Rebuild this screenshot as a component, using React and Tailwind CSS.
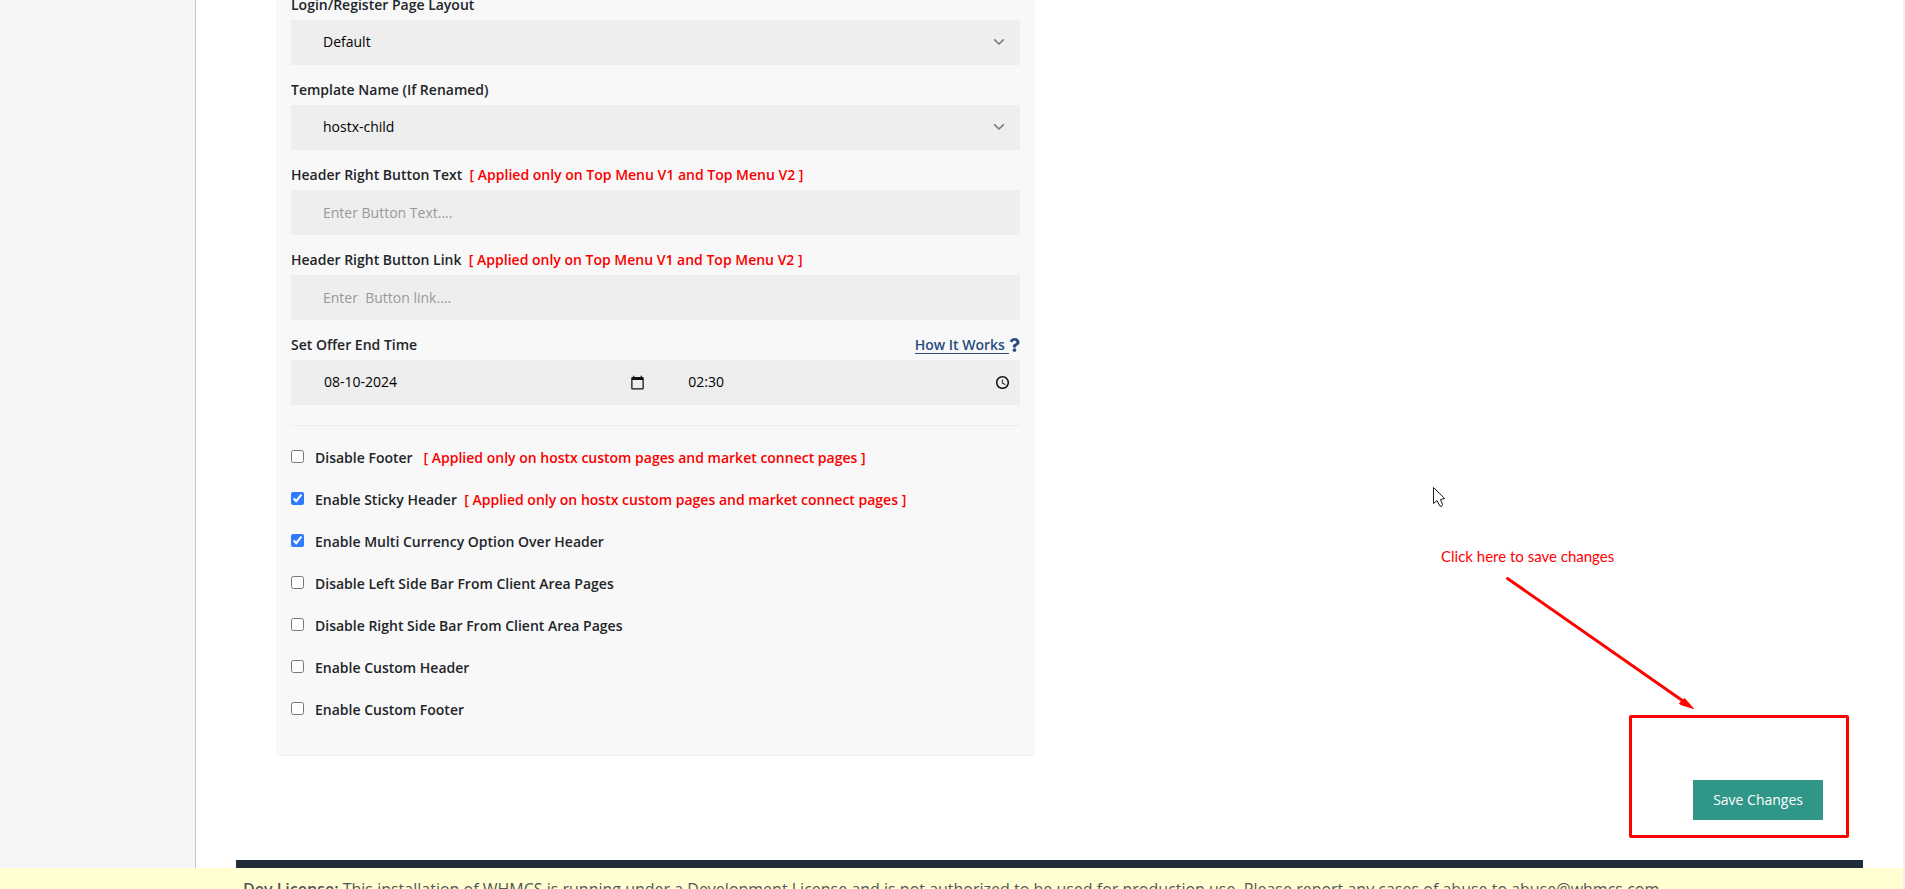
import { FaQuestion } from 'react-icons/fa';

const fieldClass =
  'block h-[45px] w-full appearance-none rounded-none border-0 bg-[#eeeeee] px-[32px] text-[14px] text-black outline-none placeholder:text-[#999999]';

function Note({ children }) {
  return <span className="whitespace-pre text-[#f80000]">{children}</span>;
}

function Label({ id, children }) {
  return (
    <label htmlFor={id} className="block whitespace-pre text-[14px] leading-[20px] font-semibold">
      {children}
    </label>
  );
}

function SelectField({ id, label, value }) {
  return (
    <div className="flex flex-col gap-[5px]">
      <Label id={id}>{label}</Label>
      <div className="relative">
        <select id={id} defaultValue={value} className={fieldClass + ' pb-[2px]'}>
          <option>{value}</option>
        </select>
        <svg viewBox="0 0 12 8" className="pointer-events-none absolute top-[18px] right-[15px] h-[8px] w-[12px]" fill="none" stroke="#777777" strokeWidth="1.5">
          <path d="M1.2 1.4 6 6 10.8 1.4" />
        </svg>
      </div>
    </div>
  );
}

function TextField({ id, label, note, placeholder }) {
  return (
    <div className="flex flex-col gap-[5px]">
      <Label id={id}>
        {label}
        <Note>{'  ' + note}</Note>
      </Label>
      <input id={id} type="text" placeholder={placeholder} className={fieldClass} />
    </div>
  );
}

function CalendarIcon() {
  return (
    <svg viewBox="0 0 24 24" className="h-[15px] w-[15px]" fill="#111111">
      <path d="M20 3h-1V1h-2v2H7V1H5v2H4c-1.100 0-2 .9-2 2v16c0 1.100.9 2 2 2h16c1.100 0 2-.9 2-2V5c0-1.100-.9-2-2-2zm0 18H4V8h16v13z" />
    </svg>
  );
}

function ClockIcon() {
  return (
    <svg viewBox="0 0 24 24" className="h-[15px] w-[15px]" fill="#111111">
      <path d="M12 1.500C6.200 1.500 1.500 6.200 1.500 12S6.200 22.500 12 22.500 22.500 17.800 22.500 12 17.800 1.500 12 1.500zm0 18.500c-4.400 0-8-3.600-8-8s3.600-8 8-8 8 3.600 8 8-3.600 8-8 8zm.5-13H11v6l5.250 3.150.75-1.230-4.500-2.670V7z" />
    </svg>
  );
}

function PickerField({ id, name, value, icon }) {
  return (
    <div className="relative flex-1">
      <input id={id} aria-label={name} type="text" defaultValue={value} className={fieldClass + ' pb-[2px] pl-[33px]'} />
      <button type="button" aria-label={'Pick ' + name} className="absolute top-[15px] right-[10px]">
        {icon}
      </button>
    </div>
  );
}

const pagesNote = '[ Applied only on hostx custom pages and market connect pages ]';
const menuNote = '[ Applied only on Top Menu V1 and Top Menu V2 ]';

const toggles = [
  { id: 'disable-footer', label: 'Disable Footer', note: '   ' + pagesNote },
  { id: 'sticky-header', label: 'Enable Sticky Header', note: '  ' + pagesNote, on: true },
  { id: 'multi-currency', label: 'Enable Multi Currency Option Over Header', on: true },
  { id: 'left-bar', label: 'Disable Left Side Bar From Client Area Pages' },
  { id: 'right-bar', label: 'Disable Right Side Bar From Client Area Pages' },
  { id: 'custom-header', label: 'Enable Custom Header' },
  { id: 'custom-footer', label: 'Enable Custom Footer' },
];

function Toggle({ id, label, note, on }) {
  return (
    <div className="flex h-[22px] items-center gap-[11px]">
      <input id={id} type="checkbox" defaultChecked={on} className="mb-[4px] h-[13px] w-[13px] accent-[#2f7bff]" />
      <Label id={id}>
        {label}
        {note && <Note>{note}</Note>}
      </Label>
    </div>
  );
}

function Callout() {
  return (
    <div className="pointer-events-none absolute right-[14px] bottom-[22px] h-[352px] w-[418px]">
      <svg viewBox="0 0 418 352" className="absolute inset-0 h-full w-full" fill="none">
        <path d="M2.500 1.500V17.500L6 14.500L9 20.200H10.800L11.500 18.500L9.500 13.500L13.700 12.500Z" fill="#fff" stroke="#1a1a24" strokeWidth="1" />
        <path d="M76.500 92.500 252 215" stroke="#ff0000" strokeWidth="3" strokeLinecap="round" />
        <path d="M262.500 222.500 253.500 212.500 252 214 248.500 217 249.500 218.500Z" fill="#ff0000" stroke="#ff0000" strokeWidth="1" />
      </svg>
      <p className="absolute top-[60px] left-[10px] font-['Lato','Open_Sans',sans-serif] text-[15px] leading-[20px] whitespace-nowrap text-[#ff0000]">
        Click here to save changes
      </p>
      <div className="absolute right-0 bottom-0 h-[123px] w-[220px] rounded-[2px] border-3 border-[#ff0000]" />
    </div>
  );
}

export default function App() {
  return (
    <div className="flex h-screen flex-col overflow-hidden border-r-2 border-[#f1f1f1] bg-white font-['Open_Sans','Noto_Sans',sans-serif] text-[#212529]">
      <div className="flex min-h-0 flex-1">
        <aside className="w-[196px] shrink-0 border-r border-[#c6c6c6] bg-[#f5f5f5]" />
        <main className="flex flex-1 flex-col justify-end px-[40px]">
          <form className="relative px-[40px] pb-[40px]">
            <div className="grid grid-cols-2 gap-[30px]">
              <section className="flex flex-col gap-[15px] rounded-b-[3px] border-b border-[#f0f0f0] bg-[#f8f8f8] px-[15px] pb-[34px]">
                <SelectField id="layout" label="Login/Register Page Layout" value="Default" />
                <SelectField id="template" label="Template Name (If Renamed)" value="hostx-child" />
                <TextField id="button-text" label="Header Right Button Text" note={menuNote} placeholder="Enter Button Text...." />
                <TextField id="button-link" label="Header Right Button Link" note={menuNote} placeholder="Enter  Button link...." />
                <div className="flex flex-col gap-[5px]">
                  <div className="flex justify-between">
                    <Label id="offer-date">Set Offer End Time</Label>
                    <a href="#how" className="flex h-[20px] text-[14px] leading-[20px] font-semibold text-[#2a4b80]">
                      <span className="h-[19px] border-b border-[#2a4b80] whitespace-pre">How It Works </span>
                      <FaQuestion className="mt-[3px] h-[14px] w-[11px]" />
                    </a>
                  </div>
                  <div className="flex">
                    <PickerField id="offer-date" name="date" value="08-10-2024" icon={<CalendarIcon />} />
                    <PickerField id="offer-time" name="time" value="02:30" icon={<ClockIcon />} />
                  </div>
                </div>
                <hr className="mt-[5px] border-[#ececec]" />
                <div className="mt-[6px] flex flex-col gap-[20px]">
                  {toggles.map((t) => (
                    <Toggle key={t.id} {...t} />
                  ))}
                </div>
              </section>
            </div>
            <div className="mt-[24px] flex justify-end">
              <button type="submit" className="h-[40px] bg-[#2f9688] px-[20px] pb-[2px] text-[14px] text-white">
                Save Changes
              </button>
            </div>
            <Callout />
          </form>
          <div className="h-[8px] shrink-0 bg-[#202c38]" />
        </main>
      </div>
      <footer className="h-[21px] shrink-0 bg-[#ffffd2] px-[243px] pt-[9px] text-[16px] leading-[24px] whitespace-nowrap text-[#555555]">
        <strong className="font-semibold">Dev License:</strong> This installation of WHMCS is running under a Development License and is not
        authorized to be used for production use. Please report any cases of abuse to abuse@whmcs.com
      </footer>
    </div>
  );
}
